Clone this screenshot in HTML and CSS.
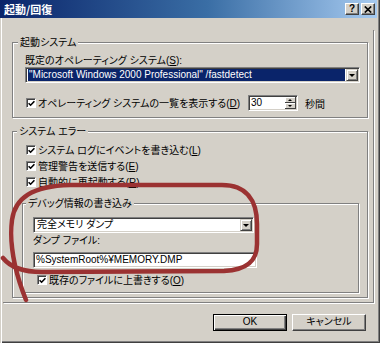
FILE: index.html
```html
<!DOCTYPE html>
<html lang="ja">
<head>
    <meta charset="UTF-8">
    <meta name="viewport" content="width=device-width, initial-scale=1.0">
    <title>起動/回復</title>
    <link rel="stylesheet" href="styles.css">
</head>
<body>

    <div class="window">
        <div class="titlebar">
            <span class="title">起動/回復</span>
            <div class="caption-buttons">
                <span class="cap-btn">?</span>
                <span class="cap-btn">
                    <svg width="8" height="7" viewBox="0 0 8 7"><path d="M0.8 0.5L7.2 6.5M7.2 0.5L0.8 6.5" stroke="#000" stroke-width="1.7"/></svg>
                </span>
            </div>
        </div>

        <div class="client">
            <div class="panel">

                <div class="group group-startup">
                    <div class="group-title">起動システム</div>
                    <div class="group-body">
                        <div class="field-label">既定のオペレーティング システム(<u>S</u>):</div>
                        <div class="combo combo-os">
                            <div class="combo-value selected">"Microsoft Windows 2000 Professional" /fastdetect</div>
                            <div class="combo-arrow"><span class="tri-down"></span></div>
                        </div>
                        <div class="check-row row-list">
                            <span class="check checked"><svg width="7" height="7" viewBox="0 0 7 7"><path d="M0.6 3.2L2.6 5.2L6.4 1.2" fill="none" stroke="#000" stroke-width="1.6"/></svg></span>
                            <span class="row-text list-text">オペレーティング システムの一覧を表示する(<u>D</u>)</span>
                            <div class="spin">
                                <span class="spin-value">30</span>
                                <div class="spin-buttons">
                                    <span class="spin-btn"><span class="tri-up"></span></span>
                                    <span class="spin-btn"><span class="tri-down small"></span></span>
                                </div>
                            </div>
                            <span class="unit">秒間</span>
                        </div>
                    </div>
                </div>

                <div class="group group-error">
                    <div class="group-title">システム エラー</div>
                    <div class="group-body">
                        <div class="check-row first">
                            <span class="check checked"><svg width="7" height="7" viewBox="0 0 7 7"><path d="M0.6 3.2L2.6 5.2L6.4 1.2" fill="none" stroke="#000" stroke-width="1.6"/></svg></span>
                            <span class="row-text">システム ログにイベントを書き込む(<u>L</u>)</span>
                        </div>
                        <div class="check-row">
                            <span class="check checked"><svg width="7" height="7" viewBox="0 0 7 7"><path d="M0.6 3.2L2.6 5.2L6.4 1.2" fill="none" stroke="#000" stroke-width="1.6"/></svg></span>
                            <span class="row-text">管理警告を送信する(<u>E</u>)</span>
                        </div>
                        <div class="check-row">
                            <span class="check checked"><svg width="7" height="7" viewBox="0 0 7 7"><path d="M0.6 3.2L2.6 5.2L6.4 1.2" fill="none" stroke="#000" stroke-width="1.6"/></svg></span>
                            <span class="row-text">自動的に再起動する(<u>R</u>)</span>
                        </div>

                        <div class="group group-debug">
                            <div class="group-title">デバッグ情報の書き込み</div>
                            <div class="group-body">
                                <div class="combo combo-dump">
                                    <div class="combo-value">完全メモリ ダンプ</div>
                                    <div class="combo-arrow"><span class="tri-down"></span></div>
                                </div>
                                <div class="field-label">ダンプ ファイル:</div>
                                <div class="textbox">%SystemRoot%¥MEMORY.DMP</div>
                                <div class="check-row overwrite">
                                    <span class="check checked"><svg width="7" height="7" viewBox="0 0 7 7"><path d="M0.6 3.2L2.6 5.2L6.4 1.2" fill="none" stroke="#000" stroke-width="1.6"/></svg></span>
                                    <span class="row-text">既存のファイルに上書きする(<u>O</u>)</span>
                                </div>
                            </div>
                        </div>
                    </div>
                </div>

            </div>

            <div class="buttons">
                <div class="btn default">OK</div>
                <div class="btn">キャンセル</div>
            </div>
        </div>

        <!-- hand-drawn marker over the debug section -->
        <svg class="annotation" width="380" height="343" viewBox="0 0 380 343">
            <path d="M26 300 C16 275 9 245 12 220 C15 198 32 186 70 185 L222 185 C246 185 257 200 257 224 L257 244 C257 262 246 270 224 271 L42 272 C24 272 11 268 3 258"
                  fill="none" stroke="#9b3232" stroke-width="4.5" stroke-linecap="round"/>
        </svg>
    </div>

</body>
</html>
```

FILE: styles.css
```css
* {
    box-sizing: border-box;
}

body {
    margin: 0;
    background-color: #d4d0c8;
    font-family: "Liberation Sans", "Noto Sans CJK JP", sans-serif;
    font-size: 10px;
    font-feature-settings: "palt";
    color: #000;
}

u {
    text-decoration-thickness: 1px;
    text-underline-offset: 1px;
}

.window {
    position: relative;
    width: 380px;
    height: 343px;
    background-color: #d4d0c8;
    box-shadow: inset 1px 0 0 #d4d0c8, inset 2px 0 0 #fff,
                inset -1px -1px 0 #404040, inset -2px -2px 0 #808080;
    overflow: hidden;
}

/* title bar */

.titlebar {
    display: flex;
    align-items: center;
    height: 18px;
    margin-right: 3px;
    background: linear-gradient(90deg, #0a246a, #3a6ea5 55%, #a6caf0);
}

.title {
    padding-left: 4px;
    color: #fff;
    font-weight: bold;
    font-size: 11px;
    font-family: "Noto Sans CJK JP", sans-serif;
    line-height: 14px;
}

.caption-buttons {
    display: flex;
    gap: 2px;
    margin-left: auto;
    padding-right: 2px;
}

.cap-btn {
    display: flex;
    align-items: center;
    justify-content: center;
    width: 14px;
    height: 12px;
    background-color: #d4d0c8;
    border: 1px solid;
    border-color: #fff #404040 #404040 #fff;
    box-shadow: inset -1px -1px 0 #808080;
    font-family: "Liberation Sans", sans-serif;
    font-weight: bold;
    font-size: 10px;
    line-height: 10px;
}

/* client area */

.client {
    padding: 12px 3px 0 3px;
}

.panel {
    margin-right: 3px;
    padding: 12px 5px 4px 9px;
    border-right: 1px solid #808080;
    border-bottom: 1px solid #808080;
    box-shadow: 1px 1px 0 #fff;
}

.group {
    border: 1px solid #808080;
    box-shadow: inset 1px 1px 0 #fff, 1px 1px 0 #fff;
}

.group-title {
    width: max-content;
    margin: -7px 0 0 5px;
    padding: 0 2px;
    background-color: #d4d0c8;
    line-height: 13px;
}

.group-startup .group-body {
    padding: 0 7px 6px 12px;
}

.field-label {
    margin-top: 5px;
    line-height: 13px;
}

/* combo boxes */

.combo {
    display: flex;
    height: 16px;
    padding: 1px;
    background-color: #fff;
    border: 1px solid;
    border-color: #808080 #fff #fff #808080;
    box-shadow: inset 1px 1px 0 #404040, inset -1px -1px 0 #d4d0c8;
}

.combo-value {
    flex: 1;
    margin: 0 1px 0 1px;
    padding-left: 1px;
    line-height: 12px;
    white-space: nowrap;
    overflow: hidden;
}

.combo-value.selected {
    background-color: #0a246a;
    color: #fff;
}

.combo-arrow {
    display: flex;
    align-items: center;
    justify-content: center;
    width: 12px;
    background-color: #d4d0c8;
    border: 1px solid;
    border-color: #d4d0c8 #404040 #404040 #d4d0c8;
    box-shadow: inset 1px 1px 0 #fff, inset -1px -1px 0 #808080;
}

.tri-down {
    width: 0;
    height: 0;
    border-left: 3px solid transparent;
    border-right: 3px solid transparent;
    border-top: 3px solid #000;
}

.tri-down.small {
    border-left-width: 2px;
    border-right-width: 2px;
    border-top-width: 2px;
}

.tri-up {
    width: 0;
    height: 0;
    border-left: 2px solid transparent;
    border-right: 2px solid transparent;
    border-bottom: 2px solid #000;
}

/* check rows */

.check-row {
    display: flex;
    align-items: center;
    height: 16px;
    padding-left: 4px;
}

.check {
    display: flex;
    align-items: center;
    justify-content: center;
    flex: none;
    width: 10px;
    height: 10px;
    background-color: #fff;
    border: 1px solid;
    border-color: #808080 #fff #fff #808080;
    box-shadow: inset 1px 1px 0 #404040;
}

.check svg {
    margin: 1px 0 0 1px;
}

.row-text {
    margin-left: 2px;
    line-height: 13px;
    white-space: nowrap;
}

.row-list {
    margin-top: 12px;
    padding-left: 1px;
}

.list-text {
    width: 210px;
}

.spin {
    display: flex;
    align-items: center;
    width: 50px;
    height: 16px;
    padding: 1px;
    background-color: #fff;
    border: 1px solid;
    border-color: #808080 #fff #fff #808080;
    box-shadow: inset 1px 1px 0 #404040, inset -1px -1px 0 #d4d0c8;
}

.spin-value {
    flex: 1;
    padding-left: 1px;
    line-height: 12px;
}

.spin-buttons {
    display: flex;
    flex-direction: column;
    width: 11px;
    height: 12px;
}

.spin-btn {
    display: flex;
    align-items: center;
    justify-content: center;
    height: 6px;
    background-color: #d4d0c8;
    border-right: 1px solid #404040;
    border-bottom: 1px solid #404040;
    box-shadow: inset 1px 1px 0 #fff;
}

.unit {
    margin-left: 7px;
}

/* system error group */

.group-error {
    margin-top: 13px;
}

.group-error > .group-title {
    margin-left: 4px;
}

.group-error > .group-body {
    padding: 0 8px 4px 9px;
}

.group-error .check-row.first {
    margin-top: 4px;
}

.group-debug {
    margin-top: 13px;
}

.group-debug > .group-title {
    margin-left: 3px;
}

.group-debug > .group-body {
    padding: 0 0 4px 10px;
}

.combo-dump {
    width: 221px;
    margin-top: 7px;
}

.group-debug .field-label {
    margin-top: 1px;
}

.textbox {
    width: 224px;
    height: 16px;
    margin-top: 5px;
    padding: 1px 2px;
    background-color: #fff;
    border: 1px solid;
    border-color: #808080 #fff #fff #808080;
    box-shadow: inset 1px 1px 0 #404040, inset -1px -1px 0 #d4d0c8;
    line-height: 12px;
    white-space: nowrap;
}

.check-row.overwrite {
    margin-top: 4px;
}

/* dialog buttons */

.buttons {
    display: flex;
    justify-content: flex-end;
    gap: 5px;
    margin-top: 11px;
    padding-right: 11px;
}

.btn {
    width: 74px;
    height: 17px;
    background-color: #d4d0c8;
    border: 1px solid;
    border-color: #fff #404040 #404040 #fff;
    box-shadow: inset -1px -1px 0 #808080;
    text-align: center;
    line-height: 14px;
}

.btn.default {
    border-color: #000;
    box-shadow: inset 1px 1px 0 #fff, inset -1px -1px 0 #404040, inset -2px -2px 0 #808080;
}

.annotation {
    position: absolute;
    top: 0;
    left: 0;
    pointer-events: none;
}
```
